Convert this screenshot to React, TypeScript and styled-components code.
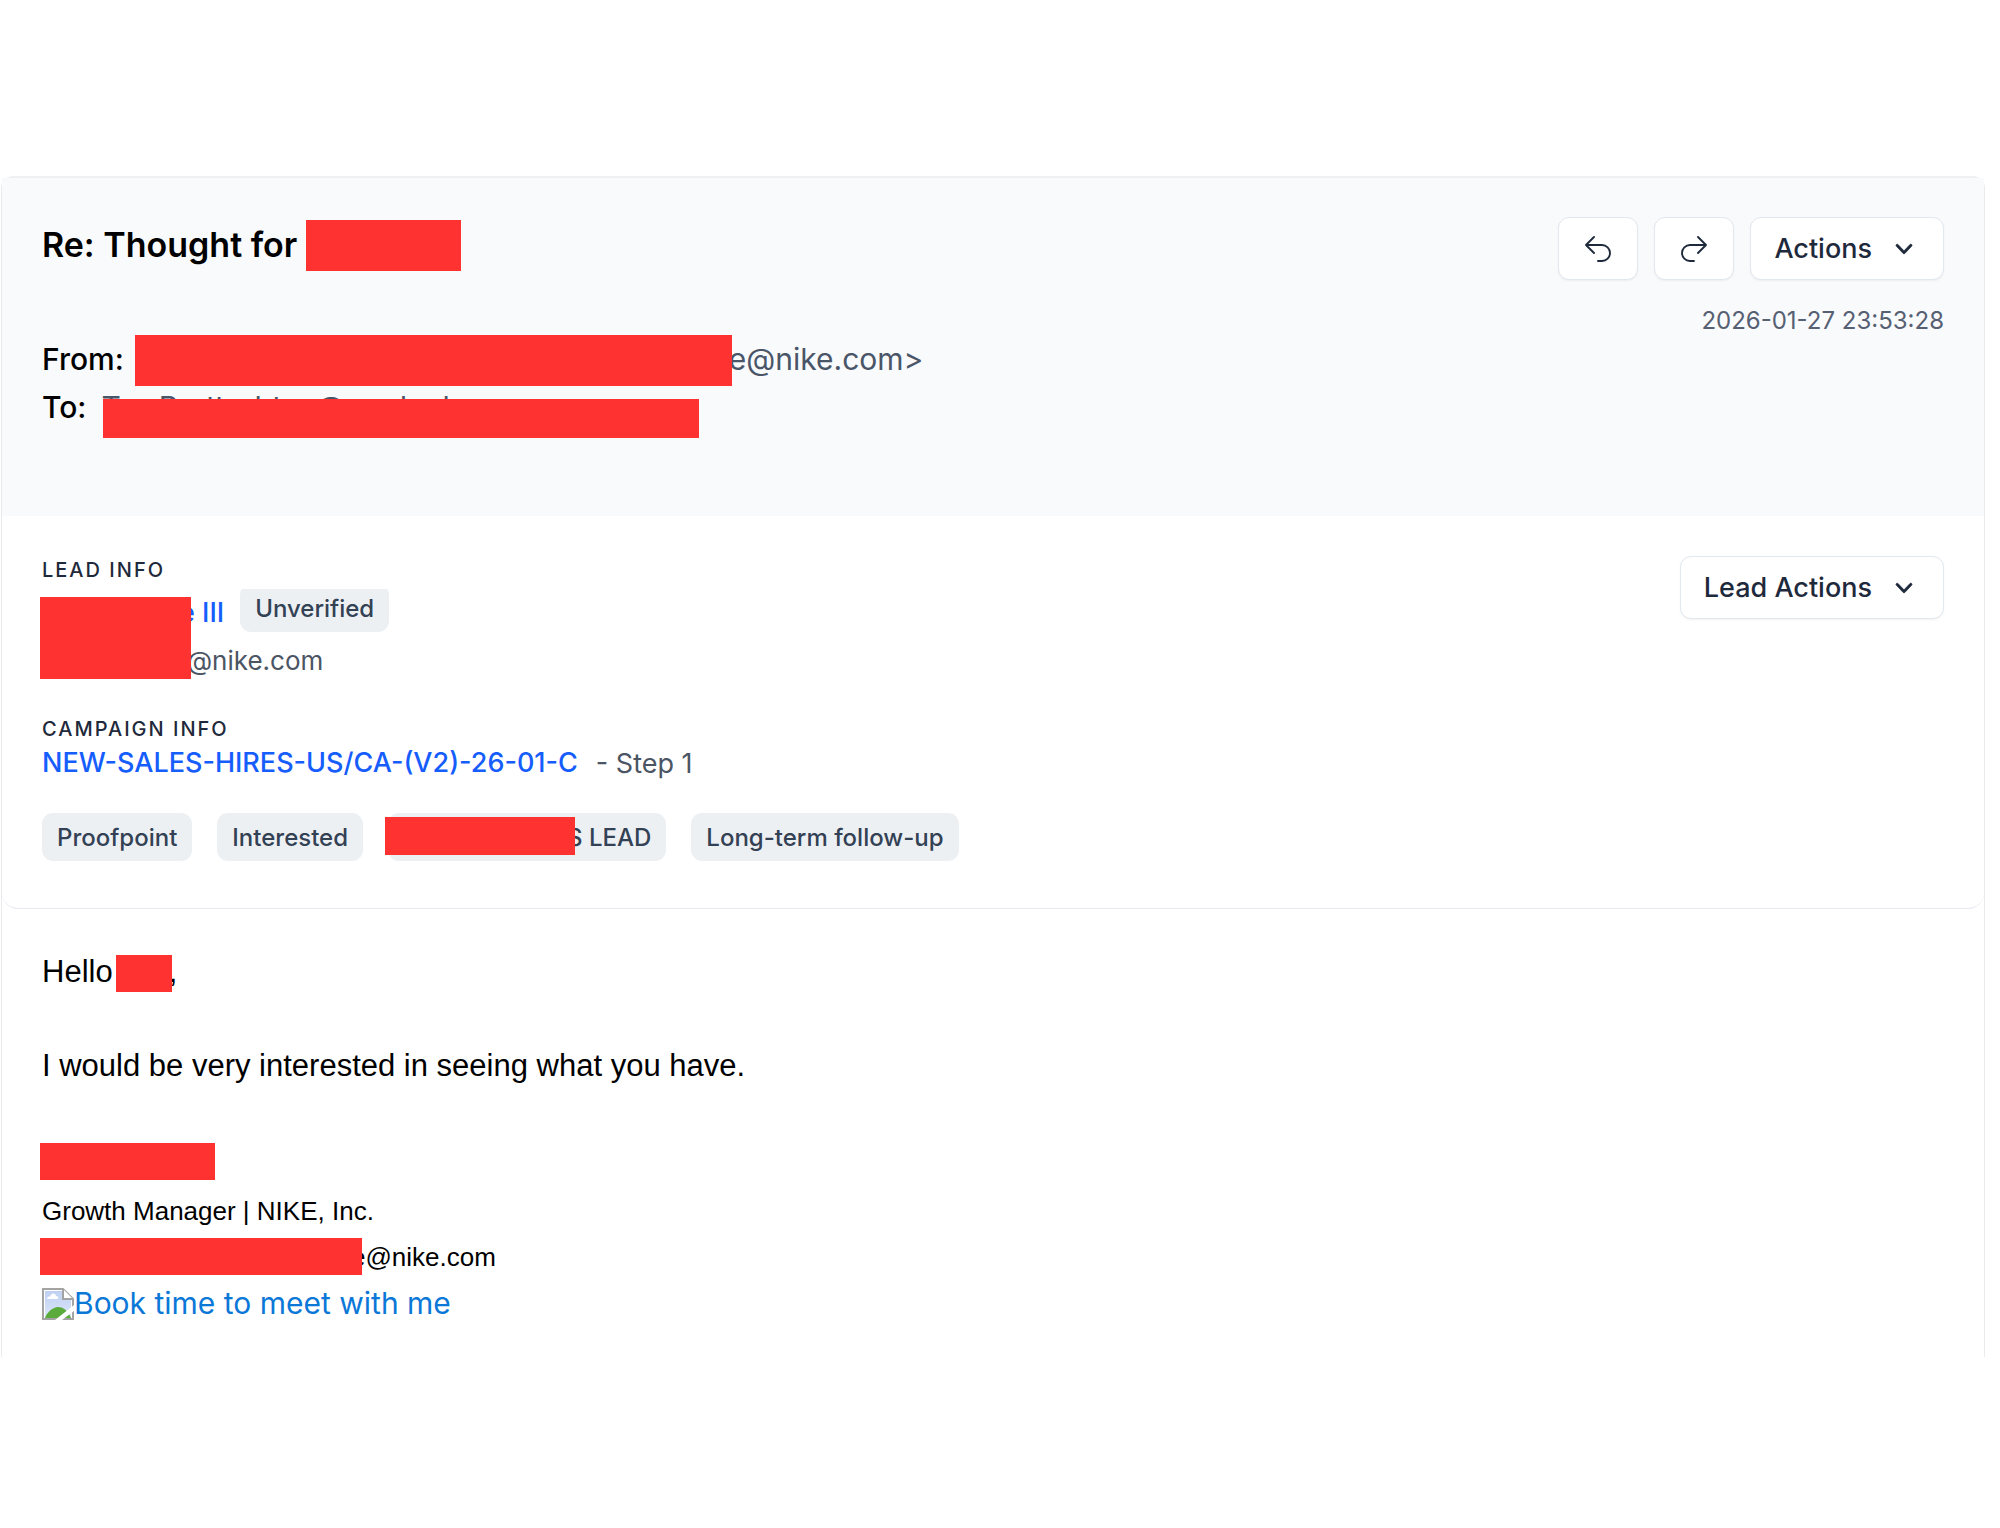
import React from "react";
import styled, { createGlobalStyle } from "styled-components";

const GlobalStyle = createGlobalStyle`
  *, *::before, *::after { box-sizing: border-box; }
  body {
    margin: 0;
    background: #ffffff;
    color: #000000;
    font-family: Inter, "Liberation Sans", sans-serif;
  }
  h1, h2, p { margin: 0; }
`;

const Page = styled.main`
  padding: 176px 15px 170px 1px;
`;

const Panel = styled.article`
  border: 1px solid #e9ebee;
  border-top: 2px solid #eef0f2;
  border-bottom: 0;
  border-radius: 12px 12px 0 0;
`;

const Header = styled.header`
  display: flex;
  justify-content: space-between;
  align-items: flex-start;
  padding: 39px 40px 85px;
  background: #f9fafc;
`;

const Title = styled.h1`
  display: flex;
  align-items: center;
  gap: 9px;
  margin-bottom: 62px;
  font-size: 34px;
  font-weight: 600;
  line-height: 56px;
`;

const Redacted = styled.span<{ $w: number; $h: number }>`
  flex: none;
  display: inline-block;
  width: ${(p) => p.$w}px;
  height: ${(p) => p.$h}px;
  background: #ff3232;
`;

const Cover = styled(Redacted)<{ $x: number; $y: number }>`
  position: absolute;
  left: ${(p) => p.$x}px;
  top: ${(p) => p.$y}px;
`;

const AddressRow = styled.p`
  position: relative;
  display: flex;
  align-items: center;
  height: 48px;
  color: #4a5568;
  font-size: 30px;
  line-height: 48px;
`;

const AddressLabel = styled.span<{ $gap: number }>`
  margin-right: ${(p) => p.$gap}px;
  color: #000000;
  font-weight: 500;
`;

const HeaderSide = styled.div`
  display: flex;
  flex-direction: column;
  align-items: flex-end;
  gap: 23px;
`;

const Toolbar = styled.div`
  display: flex;
  gap: 16px;
`;

const Button = styled.button`
  display: flex;
  align-items: center;
  justify-content: center;
  gap: 16px;
  height: 63px;
  padding: 0 23px;
  border: 1px solid #e2e8f0;
  border-radius: 11px;
  background: #ffffff;
  box-shadow: 0 1px 2px rgba(30, 41, 59, 0.06);
  color: #1e293b;
  font: 500 27px Inter, "Liberation Sans", sans-serif;
  cursor: pointer;
`;

const Timestamp = styled.time`
  color: #566072;
  font-size: 24px;
  line-height: 36px;
`;

const LeadSection = styled.section`
  display: flex;
  justify-content: space-between;
  align-items: flex-start;
  padding: 40px 40px 47px;
  border-bottom: 1px solid #e6e9ee;
  border-radius: 0 0 16px 16px;
`;

const SectionLabel = styled.h2`
  color: #1e293b;
  font-size: 20px;
  font-weight: 500;
  line-height: 28px;
  letter-spacing: 2px;
  text-transform: uppercase;
`;

const Contact = styled.div`
  position: relative;
  margin: 5px 0 30px;
`;

const NameRow = styled.div`
  display: flex;
  gap: 16px;
  height: 48px;
  padding-left: 137px;
  overflow: hidden;
`;

const TextLink = styled.a`
  color: #155dfc;
  font-size: 27px;
  font-weight: 500;
  line-height: 48px;
  text-decoration: none;
`;

const Tag = styled.span`
  position: relative;
  height: 48px;
  padding: 0 15px;
  border-radius: 11px;
  background: #edf0f3;
  color: #334155;
  font-size: 24px;
  font-weight: 500;
  line-height: 50px;
  white-space: nowrap;
`;

const StatusTag = styled(Tag)`
  margin-top: -5px;
`;

const ContactEmail = styled.p`
  padding-left: 145px;
  color: #4b5563;
  font-size: 26px;
  line-height: 48px;
`;

const Campaign = styled.p`
  display: flex;
  gap: 18px;
  align-items: center;
  margin-bottom: 30px;
  color: #4b5563;
  font-size: 27px;
  height: 40px;
`;

const Tags = styled.div`
  display: flex;
  flex-wrap: wrap;
  gap: 25px;
`;

const CoveredText = styled.span<{ $lead: number }>`
  padding-left: ${(p) => p.$lead}px;
`;

const Body = styled.section`
  padding: 39px 40px 30px;
  font-family: "Liberation Sans", Arial, sans-serif;
  font-size: 31px;
  line-height: 47px;
`;

const Line = styled.p`
  position: relative;
  display: flex;
  align-items: center;
  height: 47px;
`;

const Paragraph = styled(Line)`
  margin-bottom: 47px;
`;

const Signature = styled.div`
  margin-top: 5px;
`;

const SmallLine = styled(Line)`
  height: 46px;
  font-size: 26px;
`;

const BookLink = styled.a`
  display: flex;
  align-items: center;
  width: fit-content;
  color: #0b78d8;
  font-family: Inter, "Liberation Sans", sans-serif;
  font-size: 30px;
  line-height: 47px;
  text-decoration: none;
`;

const Reply = () => (
  <svg width="32" height="32" viewBox="0 0 24 24" fill="none" stroke="currentColor" strokeWidth="1.4" strokeLinecap="round" strokeLinejoin="round" aria-hidden="true">
    <path d="M9 15 3 9m0 0 6-6M3 9h12a6 6 0 0 1 0 12h-3" />
  </svg>
);

const Forward = () => (
  <svg width="32" height="32" viewBox="0 0 24 24" fill="none" stroke="currentColor" strokeWidth="1.4" strokeLinecap="round" strokeLinejoin="round" aria-hidden="true">
    <path d="m15 15 6-6m0 0-6-6m6 6H9a6 6 0 0 0 0 12h3" />
  </svg>
);

const Chevron = () => (
  <svg width="32" height="32" viewBox="0 0 20 20" fill="currentColor" stroke="currentColor" strokeWidth="0.4" aria-hidden="true">
    <path d="M5.23 7.21a.75.75 0 0 1 1.06.02L10 11.168l3.71-3.938a.75.75 0 1 1 1.08 1.04l-4.25 4.5a.75.75 0 0 1-1.08 0l-4.25-4.5a.75.75 0 0 1 .02-1.06z" />
  </svg>
);

const MissingImage = () => (
  <svg width="32" height="32" viewBox="0 0 32 32" aria-hidden="true">
    <defs>
      <linearGradient id="sky" x1="0" y1="0" x2="0" y2="1">
        <stop offset="0" stopColor="#bfd0f2" />
        <stop offset="1" stopColor="#dbe6fa" />
      </linearGradient>
    </defs>
    <path d="M1 1h20l10 10v20H1z" fill="#ffffff" stroke="#a3a3a3" strokeWidth="2" />
    <path d="M3 3h17v9h9v17H3z" fill="url(#sky)" />
    <path d="M5 11c0-2 2-3 3-2 1-5 6-4 6-1 3 0 3 3 1 3z" fill="#ffffff" />
    <path d="M3 30c2-6 8-11 13-11 6 0 10 4 13 11z" fill="#5aab3b" />
    <path d="M21 1v10h10" fill="#ffffff" stroke="#a3a3a3" strokeWidth="2" />
    <path d="M13 32 32 17v6L20 32z" fill="#ffffff" />
  </svg>
);

export default function App() {
  return (
    <>
      <GlobalStyle />
      <Page>
        <Panel>
          <Header>
            <div>
              <Title>
                Re: Thought for
                <Redacted $w={155} $h={51} />
              </Title>
              <AddressRow>
                <AddressLabel $gap={9}>From:</AddressLabel>
                <CoveredText $lead={596}>e@nike.com&gt;</CoveredText>
                <Cover $x={93} $y={0} $w={597} $h={51} />
              </AddressRow>
              <AddressRow>
                <AddressLabel $gap={15}>To:</AddressLabel>
                <span>Tss Prattrnhtea@mcdnnh</span>
                <Cover $x={61} $y={16} $w={596} $h={39} />
              </AddressRow>
            </div>
            <HeaderSide>
              <Toolbar>
                <Button type="button" aria-label="Reply"><Reply /></Button>
                <Button type="button" aria-label="Forward"><Forward /></Button>
                <Button type="button">Actions<Chevron /></Button>
              </Toolbar>
              <Timestamp dateTime="2026-01-27T23:53:28">2026-01-27 23:53:28</Timestamp>
            </HeaderSide>
          </Header>
          <LeadSection>
            <div>
              <SectionLabel>Lead info</SectionLabel>
              <Contact>
                <NameRow>
                  <TextLink href="#lead">e III</TextLink>
                  <StatusTag>Unverified</StatusTag>
                </NameRow>
                <ContactEmail>@nike.com</ContactEmail>
                <Cover $x={-2} $y={8} $w={151} $h={82} />
              </Contact>
              <SectionLabel>Campaign info</SectionLabel>
              <Campaign>
                <TextLink href="#campaign">NEW-SALES-HIRES-US/CA-(V2)-26-01-C</TextLink>
                <span>- Step 1</span>
              </Campaign>
              <Tags>
                <Tag>Proofpoint</Tag>
                <Tag>Interested</Tag>
                <Tag>
                  <CoveredText $lead={164}>S LEAD</CoveredText>
                  <Cover $x={-3} $y={4} $w={190} $h={38} />
                </Tag>
                <Tag>Long-term follow-up</Tag>
              </Tags>
            </div>
            <Button type="button">Lead Actions<Chevron /></Button>
          </LeadSection>
          <Body>
            <Paragraph>
              Hello
              <CoveredText $lead={56}>,</CoveredText>
              <Cover $x={74} $y={7} $w={56} $h={37} />
            </Paragraph>
            <Paragraph>I would be very interested in seeing what you have.</Paragraph>
            <Line>
              <Cover $x={-2} $y={7} $w={175} $h={37} />
            </Line>
            <Signature>
              <SmallLine>Growth Manager | NIKE, Inc.</SmallLine>
              <SmallLine>
                <CoveredText $lead={309}>e@nike.com</CoveredText>
                <Cover $x={-2} $y={4} $w={322} $h={37} />
              </SmallLine>
              <BookLink href="#book">
                <MissingImage />
                Book time to meet with me
              </BookLink>
            </Signature>
          </Body>
        </Panel>
      </Page>
    </>
  );
}
